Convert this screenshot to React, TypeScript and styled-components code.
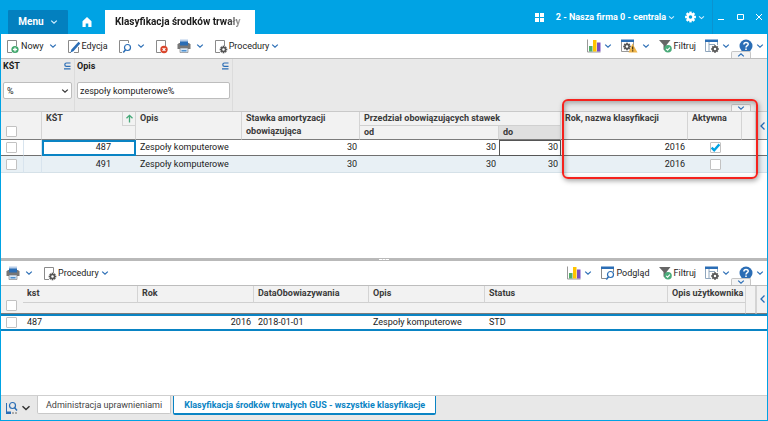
import React from "react";
import styled, { createGlobalStyle, css } from "styled-components";

const sky = "#00a3e4";
const blue = "#0a84c4";
const navy = "#2a6db5";
const line = "#c9c9c9";

const GlobalStyle = createGlobalStyle`
  * { box-sizing: border-box; }
  html, body, #root { height: 100%; }
  body { margin: 0; background: #fff; }
  body, button, input, select {
    font-family: Roboto, "Liberation Sans", sans-serif;
    font-size: 9px;
    line-height: 14px;
    color: #1c1c1c;
  }
  button { border: 0; padding: 0; background: none; cursor: pointer; }
  svg { display: block; flex: none; overflow: visible; }
`;

/* ---------- layout ---------- */

const Window = styled.div`
  display: flex;
  flex-direction: column;
  height: 100vh;
  border: 1px solid ${sky};
  border-top: 0;
  overflow: hidden;
`;

const TitleBar = styled.header`
  display: flex;
  align-items: flex-end;
  height: 34px;
  flex: none;
  background: ${sky};
  color: #fff;
`;

const MenuButton = styled.button`
  display: flex;
  align-items: center;
  justify-content: center;
  gap: 6px;
  width: 60px;
  height: 24px;
  margin-left: 7px;
  background: #0380bf;
  border-radius: 1px 1px 0 0;
  color: #fff;
  font-weight: 700;
  font-size: 10px;
`;

const HomeButton = styled.button`
  display: flex;
  align-items: center;
  justify-content: center;
  width: 37px;
  height: 24px;
`;

const DocumentTab = styled.button`
  width: 150px;
  height: 24px;
  padding: 0 10px;
  background: #fff;
  text-align: left;
  white-space: nowrap;
  font-weight: 700;
  font-size: 10px;
`;

const FadedText = styled.span`
  display: block;
  mask-image: linear-gradient(to right, #000 112px, rgba(0, 0, 0, 0.15) 130px);
`;

const TitleTools = styled.div`
  display: flex;
  align-items: center;
  height: 34px;
  margin-left: auto;
`;

const TitleButton = styled.button<{ $gap?: number }>`
  display: flex;
  align-items: center;
  gap: 2px;
  height: 34px;
  margin-right: ${(p) => p.$gap ?? 0}px;
  color: #fff;
  font-weight: 700;
  white-space: nowrap;
`;

const WindowButtons = styled.div`
  display: flex;
  align-items: center;
  gap: 11px;
  height: 34px;
  padding: 0 4px;
  border-left: 1px solid #0b93cf;
`;

const Panes = styled.main`
  display: grid;
  grid-template-rows: 5fr 3px 3fr;
  flex: 1;
  min-height: 0;
`;

const Pane = styled.section`
  position: relative;
  min-height: 0;
  overflow: hidden;
`;

const Splitter = styled.div`
  display: flex;
  justify-content: center;
  align-items: center;
  background: #b9b9b9;
`;

const SplitterGrip = styled.div`
  width: 10px;
  border-top: 1px dashed #fff;
`;

/* ---------- toolbar ---------- */

const Bar = styled.div`
  position: relative;
  display: flex;
  align-items: center;
  height: 25px;
  padding: 0 3px 0 4px;
  border-bottom: 1px solid #bdbdbd;
  background: #fff;
`;

const Group = styled.div<{ $end?: boolean }>`
  display: flex;
  gap: ${(p) => (p.$end ? 8 : 9)}px;
  margin-left: ${(p) => (p.$end ? "auto" : "0")};
`;

const ToolButton = styled.button<{ $gap?: number }>`
  display: flex;
  align-items: center;
  height: 24px;
  white-space: nowrap;
  > svg:last-child:not(:first-child) { margin-left: ${(p) => p.$gap ?? 4}px; }
`;

const FoldTab = styled.button`
  position: absolute;
  right: 16px;
  bottom: 0;
  display: flex;
  align-items: center;
  justify-content: center;
  width: 20px;
  height: 7px;
  background: #f4f4f4;
  border: 1px solid #c6c6c6;
  border-bottom: 0;
  border-radius: 2px 2px 0 0;
`;

/* ---------- filter ---------- */

const FilterPanel = styled.div`
  position: relative;
  display: flex;
  height: 52px;
  background: #e9e9e9;
`;

const FilterField = styled.div<{ $width: number }>`
  width: ${(p) => p.$width}px;
  padding: 0 2px;
  border-right: 1px solid #dcdcdc;
`;

const FilterHead = styled.div`
  display: flex;
  align-items: center;
  justify-content: space-between;
  height: 14px;
  padding-right: 1px;
  margin-bottom: 9px;
`;

const FilterLabel = styled.label`
  font-weight: 700;
`;

const control = css`
  display: block;
  width: 100%;
  height: 17px;
  border: 1px solid #bdbdbd;
  border-radius: 2px;
  background: #fff;
  outline: 0;
  appearance: none;
`;

const FilterInput = styled.input`
  ${control}
  padding: 0 2px;
`;

const SelectBox = styled.div`
  position: relative;
`;

const FilterSelect = styled.select`
  ${control}
  padding: 0 3px;
`;

const SelectArrow = styled.span`
  position: absolute;
  right: 3px;
  top: 5px;
  pointer-events: none;
`;

/* ---------- tables ---------- */

const Grid = styled.table<{ $ruled?: boolean }>`
  width: 100%;
  table-layout: fixed;
  border-collapse: separate;
  border-spacing: 0;
  border-top: ${(p) => (p.$ruled ? `1px solid ${line}` : "0")};
`;

const Col = styled.col<{ $w?: number }>`
  width: ${(p) => (p.$w ? `${p.$w}px` : "auto")};
`;

const Th = styled.th<{ $line?: boolean; $last?: boolean; $shade?: boolean; $h?: number }>`
  height: ${(p) => p.$h ?? 14}px;
  padding: ${(p) => (p.$h ? 1 : 0)}px 0 0 4px;
  background: ${(p) => (p.$shade ? "#dfdfdf" : "#f2f2f2")};
  border-right: 1px solid #d4d4d4;
  border-bottom: ${(p) => (p.$last ? "1px solid #7c7c7c" : p.$line ? "1px solid #d0d0d0" : "0")};
  text-align: left;
  vertical-align: top;
  white-space: nowrap;
  line-height: 13px;
  color: #3a3a3a;
`;

const CheckHead = styled(Th)`
  padding: 0 0 2px 5px;
  vertical-align: bottom;
  border-right: 0;
`;

const FoldHead = styled(Th)`
  padding: 0;
  border-right: 0;
  border-left: 1px solid #d4d4d4;
  vertical-align: middle;
  > button { display: flex; justify-content: center; width: 100%; }
`;

const SortHead = styled.div`
  display: flex;
  justify-content: space-between;
`;

const SortButton = styled.button`
  display: flex;
  align-items: center;
  justify-content: center;
  width: 13px;
  height: 14px;
  border-left: 1px solid #d4d4d4;
  border-bottom: 1px solid #d4d4d4;
`;

const Tr = styled.tr<{ $current?: boolean }>`
  > td {
    height: ${(p) => (p.$current ? 16 : 17)}px;
    background: ${(p) => (p.$current ? "#fff" : "#e8f0f5")};
    border-bottom: 1px solid ${(p) => (p.$current ? "#707070" : "#d5e1e8")};
  }
`;

const Td = styled.td<{ $right?: boolean; $focus?: boolean; $frame?: boolean; $edge?: boolean; $pad?: number }>`
  padding: 0 ${(p) => p.$pad ?? 3}px 0 4px;
  text-align: ${(p) => (p.$right ? "right" : "left")};
  white-space: nowrap;
  line-height: 13px;
  ${(p) => p.$edge && css`border-right: 1px solid #d8e4ee;`}
  ${(p) => p.$focus && css`outline: 2px solid ${blue}; outline-offset: -2px;`}
  ${(p) => p.$frame && css`outline: 1px solid #555; outline-offset: -1px;`}
`;

const CheckCell = styled(Td)<{ $center?: boolean }>`
  padding: 0 0 0 ${(p) => (p.$center ? 0 : 5)}px;
  > input { margin: ${(p) => (p.$center ? "0 auto" : "0")}; }
`;

const DetailRow = styled.tr`
  > td {
    height: 17px;
    border-top: 2px solid ${blue};
    border-bottom: 2px solid ${blue};
  }
`;

const Check = styled.input`
  display: block;
  width: 11px;
  height: 11px;
  margin: 0;
  appearance: none;
  border: 1px solid #c2c2c2;
  border-radius: 1px;
  background: #fff;
  &:checked {
    background: #fff
      url("data:image/svg+xml,%3Csvg xmlns='http://www.w3.org/2000/svg' viewBox='0 0 9 9'%3E%3Cpath d='M.6 4.6 3.2 7.2 8.4 1.4' fill='none' stroke='%2300a3e4' stroke-width='2.4'/%3E%3C/svg%3E")
      center / 9px 9px no-repeat;
  }
`;

const Highlight = styled.div`
  position: absolute;
  top: 65px;
  right: 9px;
  width: 196px;
  height: 80px;
  border: 2px solid #f5221d;
  border-radius: 6px;
  box-shadow: 1px 2px 5px rgba(0, 0, 0, 0.35), inset 1px 2px 5px rgba(0, 0, 0, 0.3);
  pointer-events: none;
`;

/* ---------- bottom tabs ---------- */

const Footer = styled.footer`
  display: flex;
  align-items: flex-start;
  height: 25px;
  flex: none;
  background: #e8e8e8;
  border-top: 1px solid #cfcfcf;
`;

const ViewButton = styled.button`
  display: flex;
  align-items: center;
  gap: 2px;
  width: 36px;
  height: 24px;
  padding-left: 4px;
`;

const ViewTab = styled.button<{ $active?: boolean }>`
  height: ${(p) => (p.$active ? 19 : 18)}px;
  margin-right: 2px;
  padding: 0 ${(p) => (p.$active ? 10 : 8)}px;
  background: #fff;
  border: 1px solid ${(p) => (p.$active ? blue : line)};
  border-top: 0;
  border-bottom-width: ${(p) => (p.$active ? 2 : 1)}px;
  border-radius: 0 0 2px 2px;
  color: ${(p) => (p.$active ? blue : "#444")};
  font-weight: ${(p) => (p.$active ? 700 : 400)};
  white-space: nowrap;
`;

/* ---------- icons ---------- */

const Chevron = ({ up, color = navy, size = 8 }: { up?: boolean; color?: string; size?: number }) => (
  <svg width={size} height={size} viewBox="0 0 8 8">
    <path d={up ? "M1.2 5.4 4 2.8 6.8 5.4" : "M1.2 2.6 4 5.2 6.8 2.6"} fill="none" stroke={color} strokeWidth="1.2" />
  </svg>
);

const teeth = [0, 45, 90, 135];
const Cog = ({ x, y, s = 1, color = "#555", hole = "#fff" }: { x: number; y: number; s?: number; color?: string; hole?: string }) => (
  <g transform={`translate(${x} ${y}) scale(${s})`}>
    {teeth.map((a) => (
      <rect key={a} x="-0.9" y="-4" width="1.8" height="8" fill={color} transform={`rotate(${a})`} />
    ))}
    <circle r="2.9" fill={color} />
    <circle r="1.3" fill={hole} />
  </g>
);

const Sheet = () => <path d="M7 14.500H2.500V2.500h9V8" fill="none" stroke="#8a8a8a" />;

const Icon = ({ children, w = 16 }: { children: React.ReactNode; w?: number }) => (
  <svg width={w} height="16" viewBox={`0 0 ${w} 16`}>{children}</svg>
);

const NewIcon = () => (
  <Icon>
    <Sheet />
    <circle cx="10" cy="11.500" r="3.600" fill="#3fa66b" />
    <path d="M10 9.400v4.200M7.900 11.500h4.200" stroke="#fff" strokeWidth="1.300" />
  </Icon>
);
const EditIcon = () => (
  <Icon>
    <path d="M5 14.500H2.500V2.500h9M12.500 9v5.500H8" fill="none" stroke="#8a8a8a" />
    <path d="M4.500 14.500 5.400 11.500 12.500 3.800 14.300 5.500 7.400 13.200Z" fill={navy} />
  </Icon>
);
const SheetSearchIcon = () => (
  <Icon>
    <path d="M5 14.500H2.500V2.500h9v2.500" fill="none" stroke="#8a8a8a" />
    <circle cx="10.500" cy="9.500" r="3" fill="#fff" stroke={navy} strokeWidth="1.200" />
    <path d="M8.500 11.700 6.300 14.500" stroke={navy} strokeWidth="1.500" />
  </Icon>
);
const DeleteIcon = () => (
  <Icon w={13}>
    <Sheet />
    <circle cx="10" cy="11.500" r="3.700" fill="#d9452b" />
    <path d="m8.600 10.100 2.800 2.800M11.400 10.100l-2.800 2.800" stroke="#fff" strokeWidth="1.200" />
  </Icon>
);
const PrintIcon = () => (
  <Icon>
    <path d="M4 1.500h8V5H4z" fill="#b7cde8" />
    <path d="M3 5h10l1.500 1.500V11H1.500V6.500Z" fill="#777" />
    <path d="M4 3.500h8v4H4z" fill={navy} />
    <path d="M4 10h8v4.500H4z" fill="#d7e6f5" stroke="#777" strokeWidth=".6" />
    <path d="M5.500 12h5v1.500h-5z" fill="#4d90cf" />
  </Icon>
);
const ProcIcon = () => (
  <Icon>
    <Sheet />
    <Cog x={10.500} y={11.500} s={0.95} />
  </Icon>
);
const ChartIcon = () => (
  <Icon>
    <path d="M1.500 1.500v12.500h13" fill="none" stroke="#999" />
    <path d="M3 8h3.500v5.500H3z" fill="#52ad6a" />
    <path d="M7 2h3.500v11.500H7z" fill="#ffc400" />
    <path d="M11 4.500h3.500v9H11z" fill="#7a4fc0" />
  </Icon>
);
const WarnIcon = () => (
  <Icon w={18}>
    <path d="M1.500 2.500h12v11h-12z" fill="#fff" stroke="#999" />
    <path d="M1 1.500h13v2.500H1z" fill={navy} />
    <Cog x={7} y={8.500} s={0.95} />
    <path d="M12.500 5.500 17.500 14.500h-9z" fill="#efb54a" />
    <path d="M12.700 8.500v3M12.700 12.300v1.200" stroke="#3a2d10" strokeWidth="1.200" />
  </Icon>
);
const FilterIcon = () => (
  <Icon>
    <path d="M1 2h11.500L8.500 7v6.500L5.500 11.500V7Z" fill="#666" />
    <circle cx="10" cy="10.800" r="3.800" fill="#4bab7a" />
    <path d="m8.200 10.800 1.400 1.400 2.300-2.600" fill="none" stroke="#fff" strokeWidth="1.100" />
  </Icon>
);
const TableCogIcon = () => (
  <Icon>
    <path d="M7 13.500H1.500V3h12v4M5 4v9M5 6.500h6" fill="none" stroke="#8fa6bd" />
    <path d="M1 1.500h13v2.500H1z" fill={navy} />
    <Cog x={11} y={11} s={0.95} />
  </Icon>
);
const PreviewIcon = () => (
  <Icon>
    <path d="M6 13.500H1.500V3h12v4" fill="none" stroke="#8a8a8a" />
    <path d="M1 1.500h13v2.500H1z" fill={navy} />
    <circle cx="10.500" cy="9.500" r="3" fill="#fff" stroke={navy} strokeWidth="1.200" />
    <path d="M8.500 11.700 6.300 14.500" stroke={navy} strokeWidth="1.500" />
  </Icon>
);
const HelpIcon = () => (
  <Icon>
    <circle cx="8" cy="8" r="6.500" fill={navy} />
    <path d="M5.900 6.600c0-2.900 4.300-2.600 4.300-.4C10.200 7.700 8 7.700 8 9.500M8 10.500v1.500" fill="none" stroke="#fff" strokeWidth="1.500" />
  </Icon>
);
const HomeIcon = () => (
  <svg width="10" height="10" viewBox="0 0 10 10">
    <path d="M5 0 9.500 4.200V10H6.300V6.500H3.700V10H.5V4.200Z" fill="#fff" />
  </svg>
);
const TilesIcon = () => (
  <svg width="9" height="9" viewBox="0 0 9 9">
    <path d="M0 0h4v4H0zM5 0h4v4H5zM0 5h4v4H0zM5 5h4v4H5z" fill="#fff" />
  </svg>
);
const SettingsIcon = () => (
  <svg width="11" height="12" viewBox="0 0 11 12"><Cog x={5.500} y={6} s={1.35} color="#fff" hole={sky} /></svg>
);
const SubsetIcon = () => (
  <svg width="8" height="8" viewBox="0 0 8 8">
    <path d="M7.500 1H3.500a1.700 1.700 0 0 0 0 3.400h4M1 6.800h6.500" fill="none" stroke={navy} strokeWidth="1.200" />
  </svg>
);
const LeftIcon = () => (
  <svg width="7" height="10" viewBox="0 0 7 10"><path d="M5.500 1.500 2 5l3.500 3.500" fill="none" stroke={navy} strokeWidth="1.300" /></svg>
);
const SortIcon = () => (
  <svg width="9" height="9" viewBox="0 0 9 9"><path d="M4.500 8.500V1.500M1.500 4.300l3-3 3 3" fill="none" stroke="#45a878" strokeWidth="1.300" /></svg>
);
const ViewIcon = () => (
  <svg width="14" height="14" viewBox="0 0 14 14">
    <path d="M1.500 2v9" stroke={navy} />
    <circle cx="7.500" cy="4.500" r="3" fill="none" stroke={navy} strokeWidth="1.200" />
    <path d="m9.500 6.500 2.500 3" stroke={navy} strokeWidth="1.400" />
    <path d="M1 10.500h5V13H1z" fill={navy} />
    <path d="M7 11h2v2H7zM10 11h2v2h-2z" fill="#aaa" />
  </svg>
);
const WinIcon = ({ d }: { d: string }) => (
  <svg width="8" height="8" viewBox="0 0 8 8"><path d={d} fill="none" stroke="#fff" strokeWidth="1" /></svg>
);

/* ---------- data ---------- */

const rates = [
  { code: "487", name: "Zespoły komputerowe", rate: 30, from: 30, to: 30, year: 2016, active: true },
  { code: "491", name: "Zespoły komputerowe", rate: 30, from: 30, to: 30, year: 2016, active: false },
];

const detailHeads = ["kst", "Rok", "DataObowiazywania", "Opis", "Status", "Opis użytkownika"];

/* ---------- page ---------- */

export default function App() {
  return (
    <>
      <GlobalStyle />
      <Window>
        <TitleBar>
          <MenuButton>Menu <Chevron color="#d5efff" /></MenuButton>
          <HomeButton aria-label="Start"><HomeIcon /></HomeButton>
          <DocumentTab><FadedText>Klasyfikacja środków trwały</FadedText></DocumentTab>
          <TitleTools>
            <TitleButton $gap={12} aria-label="Aplikacje"><TilesIcon /></TitleButton>
            <TitleButton $gap={10}>2 - Nasza firma 0 - centrala <Chevron color="#d5efff" size={7} /></TitleButton>
            <TitleButton $gap={7} aria-label="Ustawienia"><SettingsIcon /><Chevron color="#d5efff" size={7} /></TitleButton>
            <WindowButtons>
              <TitleButton aria-label="Minimalizuj"><WinIcon d="M1 6.500h6" /></TitleButton>
              <TitleButton aria-label="Maksymalizuj"><WinIcon d="M1.500 1.500h6v5h-6z" /></TitleButton>
              <TitleButton aria-label="Zamknij"><WinIcon d="m1 1 6 6M7 1 1 7" /></TitleButton>
            </WindowButtons>
          </TitleTools>
        </TitleBar>

        <Panes>
          <Pane>
            <Bar>
              <Group>
                <ToolButton $gap={5}><NewIcon />Nowy<Chevron /></ToolButton>
                <ToolButton><EditIcon />Edycja</ToolButton>
                <ToolButton aria-label="Szukaj"><SheetSearchIcon /><Chevron /></ToolButton>
                <ToolButton aria-label="Usuń"><DeleteIcon /></ToolButton>
                <ToolButton aria-label="Drukuj"><PrintIcon /><Chevron /></ToolButton>
                <ToolButton $gap={2}><ProcIcon />Procedury<Chevron /></ToolButton>
              </Group>
              <Group $end>
                <ToolButton $gap={2} aria-label="Wykres"><ChartIcon /><Chevron /></ToolButton>
                <ToolButton aria-label="Ostrzeżenia"><WarnIcon /><Chevron /></ToolButton>
                <ToolButton><FilterIcon />Filtruj</ToolButton>
                <ToolButton $gap={2} aria-label="Widok tabeli"><TableCogIcon /><Chevron /></ToolButton>
                <ToolButton $gap={2} aria-label="Pomoc"><HelpIcon /><Chevron /></ToolButton>
              </Group>
              <FoldTab aria-label="Zwiń"><Chevron up /></FoldTab>
            </Bar>

            <FilterPanel>
              <FilterField $width={74}>
                <FilterHead><FilterLabel htmlFor="f-kst">KŚT</FilterLabel><SubsetIcon /></FilterHead>
                <SelectBox>
                  <FilterSelect id="f-kst"><option>%</option></FilterSelect>
                  <SelectArrow><Chevron color="#333" /></SelectArrow>
                </SelectBox>
              </FilterField>
              <FilterField $width={158}>
                <FilterHead><FilterLabel htmlFor="f-opis">Opis</FilterLabel><SubsetIcon /></FilterHead>
                <FilterInput id="f-opis" type="text" defaultValue="zespoły komputerowe%" />
              </FilterField>
              <FoldTab aria-label="Rozwiń"><Chevron /></FoldTab>
            </FilterPanel>

            <Grid $ruled>
              <colgroup>
                <Col $w={23} /><Col $w={18} /><Col $w={94} /><Col $w={106} /><Col $w={118} />
                <Col $w={139} /><Col $w={62} /><Col /><Col $w={54} /><Col $w={14} /><Col $w={11} />
              </colgroup>
              <thead>
                <tr>
                  <CheckHead rowSpan={2} $last><Check type="checkbox" aria-label="Zaznacz wszystko" /></CheckHead>
                  <Th rowSpan={2} $last />
                  <Th rowSpan={2} $last>
                    <SortHead>KŚT<SortButton aria-label="Sortuj"><SortIcon /></SortButton></SortHead>
                  </Th>
                  <Th rowSpan={2} $last>Opis</Th>
                  <Th rowSpan={2} $last>Stawka amortyzacji<br />obowiązująca</Th>
                  <Th colSpan={2} $line>Przedział obowiązujących stawek</Th>
                  <Th rowSpan={2} $last>Rok, nazwa klasyfikacji</Th>
                  <Th rowSpan={2} $last>Aktywna</Th>
                  <Th rowSpan={2} $last />
                  <FoldHead rowSpan={2} $last><button aria-label="Panel boczny"><LeftIcon /></button></FoldHead>
                </tr>
                <tr>
                  <Th $last>od</Th>
                  <Th $last $shade>do</Th>
                </tr>
              </thead>
              <tbody>
                {rates.map((r, i) => (
                  <Tr key={r.code} $current={i === 0}>
                    <CheckCell $edge><Check type="checkbox" aria-label={`Zaznacz ${r.code}`} /></CheckCell>
                    <Td $edge />
                    <Td $right $focus={i === 0} $pad={25}>{r.code}</Td>
                    <Td>{r.name}</Td>
                    <Td $right>{r.rate}</Td>
                    <Td $right>{r.from}</Td>
                    <Td $right $frame={i === 0}>{r.to}</Td>
                    <Td $right>{r.year}</Td>
                    <CheckCell $center><Check type="checkbox" defaultChecked={r.active} aria-label={`Aktywna ${r.code}`} /></CheckCell>
                    <Td /><Td />
                  </Tr>
                ))}
              </tbody>
            </Grid>
            <Highlight />
          </Pane>

          <Splitter><SplitterGrip /></Splitter>

          <Pane>
            <Bar>
              <Group>
                <ToolButton aria-label="Drukuj"><PrintIcon /><Chevron /></ToolButton>
                <ToolButton $gap={2}><ProcIcon />Procedury<Chevron /></ToolButton>
              </Group>
              <Group $end>
                <ToolButton $gap={2} aria-label="Wykres"><ChartIcon /><Chevron /></ToolButton>
                <ToolButton><PreviewIcon />Podgląd</ToolButton>
                <ToolButton><FilterIcon />Filtruj</ToolButton>
                <ToolButton $gap={2} aria-label="Widok tabeli"><TableCogIcon /><Chevron /></ToolButton>
                <ToolButton $gap={2} aria-label="Pomoc"><HelpIcon /><Chevron /></ToolButton>
              </Group>
              <FoldTab aria-label="Rozwiń"><Chevron /></FoldTab>
            </Bar>
            <Grid>
              <colgroup>
                <Col $w={22} /><Col $w={115} /><Col $w={116} /><Col $w={115} /><Col $w={116} />
                <Col /><Col $w={78} /><Col $w={10} /><Col $w={11} />
              </colgroup>
              <thead>
                <tr>
                  <CheckHead rowSpan={2} $last><Check type="checkbox" aria-label="Zaznacz wszystko" /></CheckHead>
                  {detailHeads.map((h) => <Th key={h} $line $h={17}>{h}</Th>)}
                  <Th rowSpan={2} $last />
                  <FoldHead rowSpan={2} $last><button aria-label="Panel boczny"><LeftIcon /></button></FoldHead>
                </tr>
                <tr><Th colSpan={6} $last $h={11} /></tr>
              </thead>
              <tbody>
                <DetailRow>
                  <CheckCell><Check type="checkbox" aria-label="Zaznacz 487" /></CheckCell>
                  <Td>487</Td>
                  <Td $right>2016</Td>
                  <Td>2018-01-01</Td>
                  <Td>Zespoły komputerowe</Td>
                  <Td>STD</Td>
                  <Td /><Td /><Td />
                </DetailRow>
              </tbody>
            </Grid>
          </Pane>
        </Panes>

        <Footer>
          <ViewButton aria-label="Widoki"><ViewIcon /><Chevron color="#333" size={10} /></ViewButton>
          <ViewTab>Administracja uprawnieniami</ViewTab>
          <ViewTab $active>Klasyfikacja środków trwałych GUS - wszystkie klasyfikacje</ViewTab>
        </Footer>
      </Window>
    </>
  );
}
